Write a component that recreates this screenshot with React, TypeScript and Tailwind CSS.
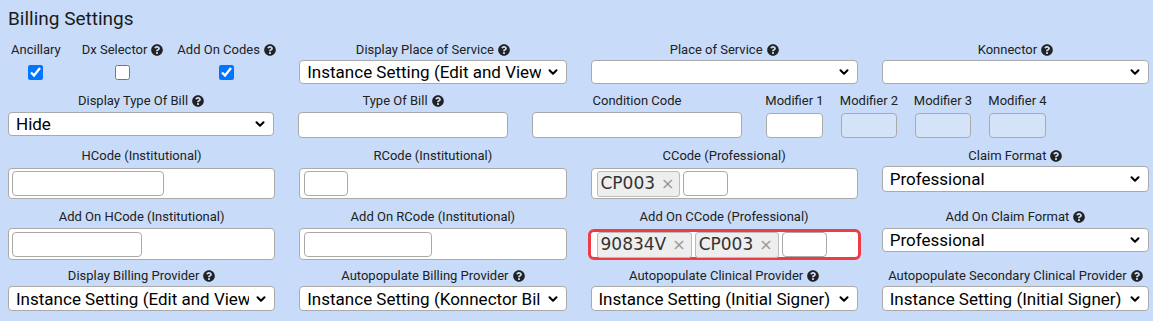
import { ChevronDown } from "lucide-react";
import { FaQuestionCircle } from "react-icons/fa";

type Field = { label: string; help?: boolean };

function Label({ label, help }: Field) {
  return (
    <div className="flex items-center justify-center gap-1 text-[13px] leading-4 text-[#212121] whitespace-nowrap">
      <span>{label}</span>
      {help && <FaQuestionCircle className="text-[#222] w-[12px] h-[12px]" />}
    </div>
  );
}

function Select({ value, h = "h-[24px]" }: { value: string; h?: string }) {
  return (
    <div className={`relative ${h} bg-white border border-[#aaa] rounded-[4px] pl-[7px] pr-[25px] flex items-center`}>
      <div className="flex-1 overflow-hidden whitespace-nowrap text-[17px] leading-[22px] text-black">
        {value}
      </div>
      <ChevronDown className="absolute right-[6px] top-1/2 -translate-y-1/2 w-[14px] h-[14px]" strokeWidth={3.5} />
    </div>
  );
}

function Chip({ text }: { text: string }) {
  return (
    <div className="h-[26px] flex items-center gap-[6px] pl-[3px] pr-[5px] bg-[#eee] border border-[#bbb] rounded-[3px] font-['DejaVu_Sans',sans-serif] text-[17px] text-[#333]">
      <span>{text}</span>
      <span className="text-[#999] text-[16px]">×</span>
    </div>
  );
}

function TagBox({ chips, inputW, red }: { chips: string[]; inputW: string; red?: boolean }) {
  return (
    <div
      className={`h-[31px] flex items-center gap-[3px] bg-white ${
        red
          ? "border-[3px] border-[#ee3b44] rounded-[6px] -mx-[3px] pl-[6px] pr-[6px]"
          : "border border-[#aaa] rounded-[4px] px-[5px]"
      }`}
    >
      {chips.map((c) => (
        <Chip key={c} text={c} />
      ))}
      <div className={`${inputW} h-[25px] border border-[#aaa] rounded-[4px] bg-white`} />
    </div>
  );
}

function Check({ label, help, checked }: { label: string; help?: boolean; checked: boolean }) {
  return (
    <div className="flex flex-col items-center gap-[7px]">
      <Label label={label} help={help} />
      <input type="checkbox" defaultChecked={checked} className="w-[15px] h-[15px] accent-[#0075ff]" />
    </div>
  );
}

export default function App() {
  return (
    <div className="w-[1153px] h-[321px] bg-[#c8dcfa] pl-2 pr-[4px] pt-[7px] font-['Roboto',sans-serif] overflow-hidden">
      <h2 className="text-[19px] leading-6 text-[#1a1a1a]">Billing Settings</h2>

      {/* row 1 */}
      <div className="grid grid-cols-4 gap-x-6 mt-[11px]">
        <div className="flex items-start pl-[3px]">
          <Check label="Ancillary" checked />
          <div className="ml-[21px]">
            <Check label="Dx Selector" help checked={false} />
          </div>
          <div className="ml-[14px]">
            <Check label="Add On Codes" help checked />
          </div>
        </div>
        <div className="flex flex-col gap-[2px]">
          <Label label="Display Place of Service" help />
          <Select value="Instance Setting (Edit and View)" />
        </div>
        <div className="flex flex-col gap-[2px]">
          <Label label="Place of Service" help />
          <Select value="" />
        </div>
        <div className="flex flex-col gap-[2px]">
          <Label label="Konnector" help />
          <Select value="" />
        </div>
      </div>

      {/* row 2 */}
      <div className="flex gap-x-6 mt-[9px]">
        <div className="w-[266px] flex flex-col gap-[3px]">
          <Label label="Display Type Of Bill" help />
          <Select value="Hide" />
        </div>
        <div className="w-[210px] flex flex-col gap-[3px]">
          <Label label="Type Of Bill" help />
          <div className="h-[26px] bg-white border border-[#aaa] rounded-[4px]" />
        </div>
        <div className="w-[210px] flex flex-col gap-[3px]">
          <Label label="Condition Code" />
          <div className="h-[26px] bg-white border border-[#aaa] rounded-[4px]" />
        </div>
        <div className="flex gap-[18px]">
          <div className="w-[57px] flex flex-col gap-[4px]">
            <Label label="Modifier 1" />
            <div className="h-[25px] bg-white border border-[#aaa] rounded-[4px]" />
          </div>
          <div className="w-[56px] flex flex-col gap-[4px]">
            <Label label="Modifier 2" />
            <div className="h-[25px] bg-[#d5e3f8] border border-[#aaa] rounded-[4px]" />
          </div>
          <div className="w-[56px] flex flex-col gap-[4px]">
            <Label label="Modifier 3" />
            <div className="h-[25px] bg-[#d5e3f8] border border-[#aaa] rounded-[4px]" />
          </div>
          <div className="w-[57px] flex flex-col gap-[4px]">
            <Label label="Modifier 4" />
            <div className="h-[25px] bg-[#d5e3f8] border border-[#aaa] rounded-[4px]" />
          </div>
        </div>
      </div>

      {/* row 3 */}
      <div className="grid grid-cols-4 gap-x-6 mt-[10px]">
        <div className="flex flex-col gap-[4px]">
          <Label label="HCode (Institutional)" />
          <div className="h-[31px] flex items-center px-[3px] bg-white border border-[#aaa] rounded-[4px]">
            <div className="w-[152px] h-[25px] border border-[#aaa] rounded-[4px]" />
          </div>
        </div>
        <div className="flex flex-col gap-[4px]">
          <Label label="RCode (Institutional)" />
          <div className="h-[31px] flex items-center px-[4px] bg-white border border-[#aaa] rounded-[4px]">
            <div className="w-[44px] h-[25px] border border-[#aaa] rounded-[4px]" />
          </div>
        </div>
        <div className="flex flex-col gap-[4px]">
          <Label label="CCode (Professional)" />
          <TagBox chips={["CP003"]} inputW="w-[45px]" />
        </div>
        <div className="flex flex-col gap-[2px]">
          <Label label="Claim Format" help />
          <Select value="Professional" h="h-[26px]" />
        </div>
      </div>

      {/* row 4 */}
      <div className="grid grid-cols-4 gap-x-6 mt-[10px]">
        <div className="flex flex-col gap-[3px]">
          <Label label="Add On HCode (Institutional)" />
          <div className="h-[32px] flex items-center px-[3px] bg-white border border-[#aaa] rounded-[4px]">
            <div className="w-[130px] h-[25px] border border-[#aaa] rounded-[4px]" />
          </div>
        </div>
        <div className="flex flex-col gap-[3px]">
          <Label label="Add On RCode (Institutional)" />
          <div className="h-[32px] flex items-center px-[4px] bg-white border border-[#aaa] rounded-[4px]">
            <div className="w-[128px] h-[25px] border border-[#aaa] rounded-[4px]" />
          </div>
        </div>
        <div className="flex flex-col gap-[4px]">
          <Label label="Add On CCode (Professional)" />
          <TagBox chips={["90834V", "CP003"]} inputW="w-[45px]" red />
        </div>
        <div className="flex flex-col gap-[3px]">
          <Label label="Add On Claim Format" help />
          <Select value="Professional" />
        </div>
      </div>

      {/* row 5 */}
      <div className="grid grid-cols-4 gap-x-6 mt-[8px]">
        <div className="flex flex-col gap-[2px]">
          <Label label="Display Billing Provider" help />
          <Select value="Instance Setting (Edit and View)" h="h-[25px]" />
        </div>
        <div className="flex flex-col gap-[2px]">
          <Label label="Autopopulate Billing Provider" help />
          <Select value="Instance Setting (Konnector Billing)" h="h-[25px]" />
        </div>
        <div className="flex flex-col gap-[2px]">
          <Label label="Autopopulate Clinical Provider" help />
          <Select value="Instance Setting (Initial Signer)" h="h-[25px]" />
        </div>
        <div className="flex flex-col gap-[2px]">
          <Label label="Autopopulate Secondary Clinical Provider" help />
          <Select value="Instance Setting (Initial Signer)" h="h-[25px]" />
        </div>
      </div>
    </div>
  );
}
